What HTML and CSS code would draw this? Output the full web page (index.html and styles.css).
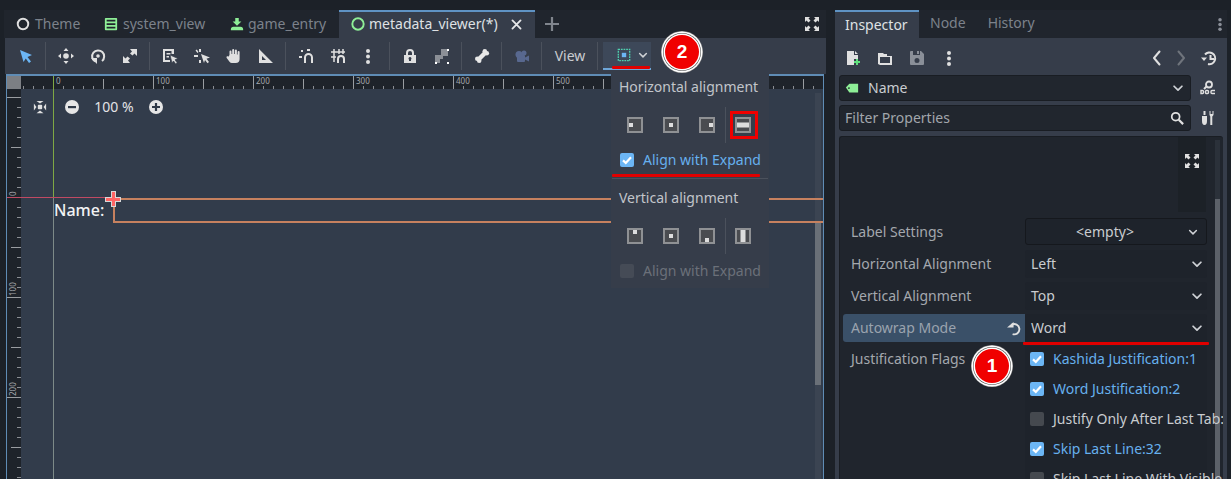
FILE: index.html
```html
<!DOCTYPE html>
<html lang="en">
<head>
<meta charset="utf-8">
<title>Godot editor</title>
<link rel="stylesheet" href="styles.css">
</head>
<body>
<svg class="defs" width="0" height="0" aria-hidden="true">
  <symbol id="chev" viewBox="0 0 16 16"><path d="M3.500 6 8 10.500 12.500 6" fill="none" stroke="currentColor" stroke-width="2" stroke-linecap="round" stroke-linejoin="round"/></symbol>
  <symbol id="check" viewBox="0 0 14 14"><rect width="14" height="14" rx="2" fill="#6cb6f5"/><path d="M3 7.400 5.800 10 11 4.200" fill="none" stroke="#fff" stroke-width="2.200"/></symbol>
  <symbol id="expand" viewBox="0 0 16 16"><path fill="currentColor" d="M1 1h5L4.500 2.500 6.500 4.500 4.500 6.500 2.500 4.500 1 6zM15 1v5l-1.500-1.500-2 2-2-2 2-2L10 1zM1 15v-5l1.500 1.500 2-2 2 2-2 2L6 15zM15 15h-5l1.500-1.500-2-2 2-2 2 2L15 10z"/></symbol>
  <symbol id="dots" viewBox="0 0 16 16"><circle cx="8" cy="3" r="2" fill="currentColor"/><circle cx="8" cy="8.500" r="2" fill="currentColor"/><circle cx="8" cy="14" r="2" fill="currentColor"/></symbol>
  <symbol id="frame" viewBox="0 0 16 16"><rect x="1" y="1" width="14" height="14" fill="#4a4c50" stroke="#8f9194" stroke-width="2"/></symbol>
</svg>

<div class="app">
  <main class="editor">
    <nav class="tabs">
      <div class="tab"><svg class="ic" viewBox="0 0 16 16"><circle cx="8" cy="8" r="6" fill="none" stroke="#e0e0e0" stroke-width="2.200"/></svg><span>Theme</span></div>
      <div class="tab"><svg class="ic" viewBox="0 0 16 16"><path fill="#8eef97" d="M2 1h12a1 1 0 0 1 1 1v12a1 1 0 0 1-1 1H2a1 1 0 0 1-1-1V2a1 1 0 0 1 1-1zm1 2v2h10V3zm0 4v2h10V7zm0 4v2h10v-2z"/></svg><span>system_view</span></div>
      <div class="tab"><svg class="ic" viewBox="0 0 16 16"><path fill="#8eef97" d="M6 1h4v4h3L8 10 3 5h3zM4 11h8a3 3 0 0 1 3 3v1H1v-1a3 3 0 0 1 3-3z"/></svg><span>game_entry</span></div>
      <div class="tab tab-active"><svg class="ic" viewBox="0 0 16 16"><circle cx="8" cy="8" r="6.500" fill="none" stroke="#8eef97" stroke-width="2.200"/></svg><span>metadata_viewer(*)</span><svg class="close" viewBox="0 0 16 16"><path d="M3 3 13 13M13 3 3 13" stroke="#e6e7e9" stroke-width="2.200" stroke-linecap="round"/></svg></div>
      <svg class="add" viewBox="0 0 16 16"><path d="M8 1v14M1 8h14" stroke="#80858d" stroke-width="2.200"/></svg>
      <svg class="full" viewBox="0 0 16 16"><use href="#expand"/></svg>
    </nav>

    <div class="toolbar">
      <button class="tool"><svg viewBox="0 0 16 16"><path fill="#6cb6f5" d="M2 2 14 7 9.500 9 13 13.500 11 15 7.800 10.500 5.500 14z"/></svg></button>
      <i class="sep"></i>
      <button class="tool"><svg viewBox="0 0 16 16"><path fill="#e0e0e0" d="M8 0l2.500 3h-5zM8 16l-2.500-3h5zM0 8l3-2.500v5zM16 8l-3 2.500v-5z"/><circle cx="8" cy="8" r="2.800" fill="#e0e0e0"/></svg></button>
      <button class="tool"><svg viewBox="0 0 16 16"><path fill="none" stroke="#e0e0e0" stroke-width="2" d="M5 13.500A6 6 0 1 1 12 13"/><path fill="#e0e0e0" d="M1 10h6v6z"/><circle cx="8" cy="8" r="1.800" fill="#e0e0e0"/></svg></button>
      <button class="tool"><svg viewBox="0 0 16 16"><path fill="#e0e0e0" d="M8 1h7v7l-2.500-2.500-2 2L8 5.500l2-2zM1 8l2.500 2.500 2-2L8 10.500l-2 2L8 15H1z"/></svg></button>
      <i class="sep"></i>
      <button class="tool"><svg viewBox="0 0 16 16"><path fill="#e0e0e0" fill-rule="evenodd" d="M1 1h11v5H9.500V3H3v9h5v2H1zM4.500 5h4v1.500h-4zM4.500 8H7v1.500H4.500z"/><path fill="#e0e0e0" d="M8 7l8 3.500-3 1.300 2.200 3-1.500 1.200-2.200-3L10 15z" stroke="#363d4a" stroke-width=".7"/></svg></button>
      <button class="tool"><svg viewBox="0 0 16 16"><path fill="#e0e0e0" d="M0 7h4v2H0zM5 1h2v3H5zM5 12h2v3H5zM1.500 2.500l1.300-1L4.500 4l-1 1z"/><path fill="#e0e0e0" d="M7 6l9 3.500-3.500 1.300 2.500 3.200-1.500 1.200-2.500-3.200L10 15z"/></svg></button>
      <button class="tool"><svg viewBox="0 0 16 16"><path fill="#e0e0e0" d="M3.500 7V3.500a1 1 0 0 1 2 0V6h.700V2a1 1 0 0 1 2 0v4h.700V2.500a1 1 0 0 1 2 0V6.500h.700V4a1 1 0 0 1 2 0v7a4 4 0 0 1-4 4H6a3 3 0 0 1-2.500-1.300L.700 10c-.8-1.200.8-2.300 1.700-1.300z"/></svg></button>
      <button class="tool"><svg viewBox="0 0 16 16"><path fill="#e0e0e0" fill-rule="evenodd" d="M1 1v14h14zM4 8l4 4H4z"/></svg></button>
      <i class="sep"></i>
      <button class="tool"><svg viewBox="0 0 16 16"><path fill="none" stroke="#e0e0e0" stroke-width="2" d="M7 15V9.500a3.500 3.500 0 0 1 7 0V15"/><rect x="1" y="8" width="3" height="2" fill="#e0e0e0"/><rect x="3" y="2" width="2" height="2" fill="#e0e0e0"/><rect x="9" y="1" width="3" height="2" fill="#e0e0e0"/></svg></button>
      <button class="tool"><svg viewBox="0 0 16 16"><path fill="none" stroke="#e0e0e0" stroke-width="1.500" d="M1 4h9M1 9h5M4 1v13M9 1v5"/><path fill="none" stroke="#e0e0e0" stroke-width="2" d="M8 15v-4a3 3 0 0 1 6 0v4"/><path stroke="#e0e0e0" stroke-width="1.500" d="M13 1v5M10 4h5"/></svg></button>
      <button class="tool tool-dots"><svg viewBox="0 0 16 16"><use href="#dots"/></svg></button>
      <i class="sep"></i>
      <button class="tool"><svg viewBox="0 0 16 16"><path fill="none" stroke="#e0e0e0" stroke-width="2" d="M5 7V5a3 3 0 0 1 6 0v2"/><path fill="#e0e0e0" fill-rule="evenodd" d="M2 7h12v8H2zM8 9a1.500 1.500 0 0 0-1 2.600V13h2v-1.400A1.500 1.500 0 0 0 8 9z"/></svg></button>
      <button class="tool"><svg viewBox="0 0 16 16"><path fill="#8b8f96" d="M1 7h5v8H1zM6 7h3v4H6zM7 1h7v7H7z"/><path fill="#fff" d="M1 14h2v2H1zM13 14h2v2h-2zM13 1h2v2h-2z"/></svg></button>
      <i class="sep"></i>
      <button class="tool"><svg viewBox="0 0 16 16"><path d="M4.500 11.500 11.500 4.500" stroke="#e8e8e8" stroke-width="4.500"/><circle cx="3.300" cy="10.800" r="2.300" fill="#e8e8e8"/><circle cx="5.200" cy="12.800" r="2.300" fill="#e8e8e8"/><circle cx="10.800" cy="3.300" r="2.300" fill="#e8e8e8"/><circle cx="12.800" cy="5.200" r="2.300" fill="#e8e8e8"/></svg></button>
      <i class="sep"></i>
      <button class="tool"><svg viewBox="0 0 16 16"><g fill="#58688f"><circle cx="5" cy="6.500" r="3.500"/><circle cx="10" cy="5" r="2.500"/><rect x="3" y="7" width="8" height="7" rx="1"/><path d="M11 9.500l4-2v6l-4-2z"/></g></svg></button>
      <i class="sep"></i>
      <button class="view-btn">View</button>
      <i class="sep"></i>
      <button class="anchor-btn"><svg class="anchor-ic" viewBox="0 0 16 16"><path fill="none" stroke="#4fd1b0" stroke-width="1.500" stroke-dasharray="2 1" d="M1.500 1.500h13v13h-13z"/><rect x="5.500" y="5.500" width="5" height="5" fill="#6cb6f5"/></svg><svg class="chev chev-anchor" viewBox="0 0 16 16"><use href="#chev"/></svg></button>
    </div>

    <section class="viewport">
      <div class="corner"></div>
      <div class="ruler-h"></div>
      <div class="ruler-v"></div>
      <span class="rnum rnum-h n0">0</span><span class="rnum rnum-h n100">100</span><span class="rnum rnum-h n200">200</span><span class="rnum rnum-h n300">300</span><span class="rnum rnum-h n400">400</span><span class="rnum rnum-h n500">500</span>
      <span class="rnum rnum-v v0">0</span><span class="rnum rnum-v v100">100</span><span class="rnum rnum-v v200">200</span>
      <div class="guide-v"></div>
      <div class="guide-v-low"></div>
      <div class="guide-h"></div>
      <div class="zoombar">
        <svg class="center-ic" viewBox="0 0 16 16"><path fill="#e0e0e0" d="M1 4l3 4-3 4zM15 4l-3 4 3 4zM4 1l4 3 4-3zM4 15l4-3 4 3z"/><rect x="5.500" y="5.500" width="5" height="5" rx="1" fill="#e0e0e0"/></svg>
        <svg class="zoom-ic" viewBox="0 0 16 16"><circle cx="8" cy="8" r="7" fill="#e6e6e6"/><rect x="4" y="7" width="8" height="2.200" fill="#2f3947"/></svg>
        <span class="zoom-val">100 %</span>
        <svg class="zoom-ic" viewBox="0 0 16 16"><circle cx="8" cy="8" r="7" fill="#e6e6e6"/><path d="M4 8h8M8 4v8" stroke="#2f3947" stroke-width="2.200"/></svg>
      </div>
      <div class="vp-scroll"></div>
      <div class="node-box"></div>
      <span class="node-label">Name:</span>
      <div class="handle"></div>
    </section>
  </main>

  <aside class="dock">
    <nav class="dock-tabs">
      <div class="dtab dtab-active">Inspector</div>
      <div class="dtab">Node</div>
      <div class="dtab">History</div>
      <svg class="dock-menu" viewBox="0 0 16 16"><use href="#dots"/></svg>
    </nav>
    <div class="dock-body">
      <div class="dock-tools">
        <svg class="ic-d" viewBox="0 0 16 16"><path fill="#e0e0e0" d="M2 1h7v4h4v4H9v6H2zM10 1l3 3h-3z"/><path fill="#5fe07c" d="M11 9h2v2h2v2h-2v2h-2v-2H9v-2h2z"/></svg>
        <svg class="ic-d" viewBox="0 0 16 16"><path fill="#e0e0e0" fill-rule="evenodd" d="M1 3h5l1 1h3v2h5v9H3L1 14zM3 7v6h10V7z"/></svg>
        <svg class="ic-d dim" viewBox="0 0 16 16"><path fill="#8a8f98" fill-rule="evenodd" d="M2 1h2v4h7V1h1l3 3v10a1 1 0 0 1-1 1H2a1 1 0 0 1-1-1V2a1 1 0 0 1 1-1zM8 8a2.500 2.500 0 1 0 0 5 2.500 2.500 0 0 0 0-5zM8 1h2v3H8z"/></svg>
        <svg class="ic-d dots-d" viewBox="0 0 16 16"><use href="#dots"/></svg>
        <span class="grow"></span>
        <svg class="ic-d nav" viewBox="0 0 16 16"><path d="M10.500 1.500 5 8l5.500 6.500" fill="none" stroke="#e0e0e0" stroke-width="2" stroke-linecap="round" stroke-linejoin="round"/></svg>
        <svg class="ic-d nav" viewBox="0 0 16 16"><path d="M5.500 1.500 11 8l-5.500 6.500" fill="none" stroke="#6f747c" stroke-width="2" stroke-linecap="round" stroke-linejoin="round"/></svg>
        <svg class="ic-d hist" viewBox="0 0 16 16"><path fill="none" stroke="#e0e0e0" stroke-width="2" d="M4 4.500A5.800 5.800 0 1 1 7 14M9.500 5v4H13"/><path fill="#e0e0e0" d="M0 7.500h6L3 11z"/></svg>
      </div>
      <div class="field-row">
        <div class="field"><svg class="tag" viewBox="0 0 16 16"><path fill="#8eef97" d="M1 7.500 5 3h10v10H5z"/><circle cx="4.500" cy="8" r="1" fill="#1f242c"/></svg><span class="field-text">Name</span><svg class="chev" viewBox="0 0 16 16"><use href="#chev"/></svg></div>
        <svg class="side-ic" viewBox="0 0 16 16"><circle cx="9" cy="4.500" r="3" fill="none" stroke="#e0e0e0" stroke-width="1.800"/><path d="M6.500 6.500 4 9" stroke="#e0e0e0" stroke-width="2"/><path fill="none" stroke="#e0e0e0" stroke-width="1.400" d="M1 10.500h1.500a1 1 0 0 1 1 1v1a1 1 0 0 1-1 1H1zM6 10.500h1.500a1 1 0 0 1 1 1v1a1 1 0 0 1-1 1H6a1 1 0 0 1-.5-1v-1a1 1 0 0 1 .5-1zM15 10.500h-3a1 1 0 0 0-1 1v1a1 1 0 0 0 1 1h3"/></svg>
      </div>
      <div class="field-row">
        <div class="field filter"><span class="field-text dim-text">Filter Properties</span><svg class="search" viewBox="0 0 16 16"><circle cx="6.500" cy="6.500" r="4.500" fill="none" stroke="#e0e0e0" stroke-width="2"/><path d="M10 10l5 5" stroke="#e0e0e0" stroke-width="2.500"/></svg></div>
        <svg class="side-ic" viewBox="0 0 16 16"><path fill="#e0e0e0" d="M2 6h5v5a2.500 4 0 0 1-5 0zM3.500 1h2v4h-2zM9.500 1h1v3h2V1h1v4l-1.200 1.500V15h-2V6.500L9.500 5z"/></svg>
      </div>
      <section class="props">
        <div class="preview"><div class="preview-btn"><svg class="full-small" viewBox="0 0 16 16"><use href="#expand"/></svg></div></div>
        <div class="prop"><label class="pl">Label Settings</label><div class="pf pf-res"><span class="center-text">&lt;empty&gt;</span><svg class="chev small" viewBox="0 0 16 16"><use href="#chev"/></svg></div></div>
        <div class="prop"><label class="pl">Horizontal Alignment</label><div class="pf"><span>Left</span><svg class="chev" viewBox="0 0 16 16"><use href="#chev"/></svg></div></div>
        <div class="prop"><label class="pl">Vertical Alignment</label><div class="pf"><span>Top</span><svg class="chev" viewBox="0 0 16 16"><use href="#chev"/></svg></div></div>
        <div class="prop"><label class="pl pl-mod">Autowrap Mode<svg class="revert" viewBox="0 0 16 16"><path fill="none" stroke="#e0e0e0" stroke-width="2" d="M5 4a5.500 5.500 0 1 1 1 10"/><path fill="#e0e0e0" d="M0 7h7V1z"/></svg></label><div class="pf"><span>Word</span><svg class="chev" viewBox="0 0 16 16"><use href="#chev"/></svg></div></div>
        <div class="flags">
          <div class="flags-label">Justification Flags</div>
          <div class="flags-list">
            <div class="flag on"><svg class="cb" viewBox="0 0 14 14"><use href="#check"/></svg>Kashida Justification:1</div>
            <div class="flag on"><svg class="cb" viewBox="0 0 14 14"><use href="#check"/></svg>Word Justification:2</div>
            <div class="flag"><span class="cb cb-off"></span>Justify Only After Last Tab:</div>
            <div class="flag on"><svg class="cb" viewBox="0 0 14 14"><use href="#check"/></svg>Skip Last Line:32</div>
            <div class="flag"><span class="cb cb-off"></span>Skip Last Line With Visible</div>
          </div>
        </div>
        <div class="props-scroll"><div class="props-thumb"></div></div>
      </section>
    </div>
  </aside>

  <div class="popup">
    <div class="pop-title">Horizontal alignment</div>
    <div class="pop-icons">
      <svg class="al" viewBox="0 0 16 16"><use href="#frame"/><rect x="2" y="6" width="4" height="4" fill="#ddd"/></svg>
      <svg class="al" viewBox="0 0 16 16"><use href="#frame"/><rect x="6" y="6" width="4" height="4" fill="#ddd"/></svg>
      <svg class="al" viewBox="0 0 16 16"><use href="#frame"/><rect x="10" y="6" width="4" height="4" fill="#ddd"/></svg>
      <i class="vsep"></i>
      <svg class="al" viewBox="0 0 16 16"><use href="#frame"/><rect x="2" y="5.500" width="12" height="5" fill="#ddd"/></svg>
    </div>
    <div class="pop-check on"><svg class="cb" viewBox="0 0 14 14"><use href="#check"/></svg>Align with Expand</div>
    <div class="pop-line"></div>
    <div class="pop-title second">Vertical alignment</div>
    <div class="pop-icons">
      <svg class="al" viewBox="0 0 16 16"><use href="#frame"/><rect x="6" y="2" width="4" height="4" fill="#ddd"/></svg>
      <svg class="al" viewBox="0 0 16 16"><use href="#frame"/><rect x="6" y="6" width="4" height="4" fill="#ddd"/></svg>
      <svg class="al" viewBox="0 0 16 16"><use href="#frame"/><rect x="6" y="10" width="4" height="4" fill="#ddd"/></svg>
      <i class="vsep"></i>
      <svg class="al" viewBox="0 0 16 16"><use href="#frame"/><rect x="5.500" y="2" width="5" height="12" fill="#ddd"/></svg>
    </div>
    <div class="pop-check off"><span class="cb cb-off"></span>Align with Expand</div>
  </div>

  <div class="mark-box"></div>
  <div class="mark-line ml-anchor"></div>
  <div class="mark-line ml-expand"></div>
  <div class="mark-line ml-word"></div>
  <div class="badge b2">2</div>
  <div class="badge b1">1</div>
</div>
</body>
</html>
```
FILE: styles.css
```css
* { box-sizing: border-box; }
html, body { margin: 0; height: 479px; overflow: hidden; background: #1c2128; }
body { font: 14px/20px "Noto Sans", sans-serif; color: #c9ccd0; }
.defs { position: absolute; }
button { font: inherit; color: inherit; background: none; border: 0; padding: 0; }
svg { display: block; flex: none; color: #e0e0e0; }

.app { position: relative; display: flex; gap: 9px; width: 1231px; height: 479px; padding: 10px 4px 0; }
.editor { display: flex; flex-direction: column; width: 822px; }
.dock { display: flex; flex-direction: column; width: 392px; }

/* tabs */
.tabs { display: flex; align-items: stretch; height: 28px; background: #20252d; flex: none; }
.tab { display: flex; align-items: center; gap: 5px; padding: 0 11px 0 12px; color: #7c828b; white-space: nowrap; }
.tab:nth-child(1) { width: 81px; padding-left: 12px; gap: 5px; }
.tab:nth-child(2) { width: 126px; padding-left: 19px; }
.tab:nth-child(3) { width: 128px; padding-left: 19px; gap: 4px; }
.tab-active { width: 196px; background: #363d4a; border-top: 2px solid #5f93c4; color: #dfe1e4; padding: 0 0 2px 12px; gap: 4px; }
.ic { width: 14px; height: 14px; }
.close { width: 13px; height: 13px; margin-left: 8px; }
.add { width: 16px; height: 16px; margin: 6px 0 0 9px; }
.full { width: 16px; height: 16px; margin: 6px 6px 0 auto; }

/* toolbar */
.toolbar { display: flex; align-items: center; height: 36px; margin-left: 1px; padding-left: 5px; background: #363d4a; flex: none; }
.tool { width: 32px; height: 30px; display: flex; align-items: center; justify-content: center; }
.tool svg { width: 16px; height: 16px; }
.tool-dots { margin-left: -2px; margin-right: 2px; }
.sep { display: block; width: 1px; height: 28px; margin: 0 4px 0 3px; background: #4b515c; flex: none; }
.view-btn { width: 48px; height: 30px; color: #c9ccd0; text-align: center; }
.anchor-btn { display: flex; align-items: center; gap: 6px; width: 48px; height: 28px; margin-left: 1px; padding: 0 0 0 14px; background: #3d4859; border-bottom: 2px solid #6ea6d8; }
.anchor-ic { width: 14px; height: 14px; }
.chev { width: 14px; height: 14px; color: #cfd2d6; margin-left: auto; }
.chev-anchor { margin-left: 0; width: 12px; height: 12px; }

/* viewport */
.viewport { position: relative; flex: 1; margin: 0 2px; background: #323c4b; border: solid #5f8cb5; border-width: 2px 1px 0 1px; overflow: hidden; }
.corner { position: absolute; left: 0; top: 0; width: 14px; height: 13px; background: #7c7f84; }
.ruler-h { position: absolute; left: 14px; right: 0; top: 0; height: 13px; background-color: #1e232a;
  background-image:
    repeating-linear-gradient(90deg, transparent 0 32px, #9a9da1 32px 33px, transparent 33px 100px),
    repeating-linear-gradient(90deg, transparent 0 32px, #9a9da1 32px 33px, transparent 33px 50px),
    repeating-linear-gradient(90deg, transparent 0 2px, #8b8e93 2px 3px, transparent 3px 10px);
  background-repeat: no-repeat;
  background-size: 100% 13px, 100% 10px, 100% 3px;
  background-position: 0 100%; }
.ruler-v { position: absolute; left: 0; top: 13px; bottom: 0; width: 14px; background-color: #1e232a;
  background-image:
    repeating-linear-gradient(180deg, transparent 0 8px, #9a9da1 8px 9px, transparent 9px 100px),
    repeating-linear-gradient(180deg, transparent 0 8px, #9a9da1 8px 9px, transparent 9px 50px),
    repeating-linear-gradient(180deg, transparent 0 8px, #8b8e93 8px 9px, transparent 9px 10px);
  background-repeat: no-repeat;
  background-size: 14px 100%, 10px 100%, 4px 100%;
  background-position: 100% 0; }
.rnum { position: absolute; font-size: 8px; line-height: 10px; color: #a5a8ad; }
.rnum-h { top: 0; }
.n0 { left: 49px; } .n100 { left: 149px; } .n200 { left: 249px; } .n300 { left: 349px; } .n400 { left: 449px; } .n500 { left: 549px; }
.rnum-v { left: 1px; transform: rotate(-90deg); transform-origin: 0 0; }
.v0 { top: 120px; } .v100 { top: 220px; } .v200 { top: 320px; }
.guide-v { position: absolute; left: 46px; top: 0; height: 121px; width: 1px; background: #7fa844; }
.guide-v-low { position: absolute; left: 46px; top: 122px; bottom: 0; width: 1px; background: #7d8a88; }
.guide-h { position: absolute; left: 0; top: 121px; width: 106px; height: 1px; background: #c04a63; }
.zoombar { position: absolute; left: 26px; top: 23px; display: flex; align-items: center; height: 16px; }
.center-ic { width: 14px; height: 14px; }
.zoom-ic { width: 16px; height: 16px; }
.center-ic + .zoom-ic { margin-left: 17px; }
.zoom-val { width: 68px; text-align: center; font-size: 14px; color: #e2e3e6; }
.vp-scroll { position: absolute; right: 2px; top: 17px; bottom: 0; width: 6px; background: #3b4452; }
.vp-scroll::after { content: ""; position: absolute; left: 0; right: 0; top: 130px; height: 162px; background: #6a7078; }
.node-box { position: absolute; left: 106px; top: 122px; right: 0; height: 25px; border: solid #c6815f; border-width: 2px 0 2px 2px; }
.node-label { position: absolute; left: 47px; top: 124px; font-size: 16px; color: #f2f3f4; font-weight: 500; }
.handle { position: absolute; left: 98px; top: 115px; width: 16px; height: 16px;
  background:
    linear-gradient(#ff6464, #ff6464) center / 3px 14px no-repeat,
    linear-gradient(#ff6464, #ff6464) center / 14px 3px no-repeat,
    linear-gradient(#d8d8d8, #d8d8d8) center / 5px 16px no-repeat,
    linear-gradient(#d8d8d8, #d8d8d8) center / 16px 5px no-repeat; }

/* dock */
.dock-tabs { display: flex; align-items: center; height: 28px; background: #20252d; flex: none; }
.dtab { height: 28px; line-height: 26px; padding: 0 11px; color: #7c828b; }
.dtab-active { width: 84px; background: #363d4a; border-top: 2px solid #5f93c4; padding: 0 10px; color: #dfe1e4; line-height: 26px; }
.dock-menu { width: 14px; height: 14px; margin-left: auto; color: #8a8f98; }
.dock-body { flex: 1; display: flex; flex-direction: column; background: #363d4a; padding: 0 4px; min-height: 0; }
.dock-tools { display: flex; align-items: center; height: 37px; flex: none; padding: 3px 6px 0 6px; }
.ic-d { width: 16px; height: 16px; margin-right: 16px; }
.dots-d { margin-right: 0; }
.grow { flex: 1; }
.nav { margin-right: 8px; }
.hist { margin: 0 0 0 4px; }
.field-row { display: flex; align-items: center; gap: 9px; height: 26px; margin-bottom: 4px; flex: none; }
.field { display: flex; align-items: center; width: 352px; height: 26px; padding: 0 5px; background: #21262e; border: 1px solid #191d23; border-radius: 3px; }
.tag { width: 14px; height: 14px; margin-right: 9px; }
.search { width: 14px; height: 14px; margin-left: auto; margin-right: 1px; }
.dim-text { color: #a2a6ac; }
.side-ic { width: 16px; height: 16px; }
.props { position: relative; flex: 1; min-height: 0; margin-top: 1px; padding: 0 4px; background: #20252d; border: solid #191d23; border-width: 1px 0 0 1px; border-radius: 3px 3px 0 0; overflow: hidden; }
.preview { height: 75px; margin: 0 13px 6px 0; display: flex; justify-content: flex-end; }
.preview-btn { width: 28px; background: #1c2127; display: flex; justify-content: center; padding-top: 16px; }
.full-small { width: 16px; height: 16px; }
.prop { display: flex; height: 28px; margin-bottom: 4px; width: 364px; margin-left: -1px; }
.pl { flex: none; display: flex; align-items: center; width: 182px; padding-left: 8px; color: #a4a8ae; }
.pl-mod { background: #3a5068; border-radius: 3px 0 0 3px; color: #9aa3ae; position: relative; }
.revert { position: absolute; right: 3px; width: 15px; height: 15px; }
.pf { display: flex; align-items: center; width: 182px; padding: 0 3px 0 6px; background: #1e232b; color: #c9ccd0; border-radius: 3px; }
.pf-res { border: 1px solid #15181d; height: 27px; padding-right: 7px; }
.center-text { flex: 1; text-align: center; padding-right: 9px; }
.small { width: 12px; height: 12px; }
.flags { position: relative; z-index: 1; display: flex; width: 364px; margin-left: -1px; }
.flags-label { width: 182px; padding: 3px 0 0 8px; color: #a4a8ae; }
.flags-list { width: 182px; background: #1e232b; padding: 3px 0 0 5px; white-space: nowrap; }
.flag { display: flex; align-items: center; gap: 9px; height: 30px; margin-top: -5px; margin-bottom: 5px; color: #c9ccd0; }
.flag.on { color: #66b0ee; }
.cb { width: 14px; height: 14px; flex: none; }
.cb-off { display: block; background: #45494f; border-radius: 2px; }
.props-scroll { position: absolute; right: 3px; top: 3px; bottom: 0; width: 5px; background: #2b313a; }
.props-thumb { position: absolute; left: 0; right: 0; top: 59px; bottom: 0; background: #5c6169; }

/* popup */
.popup { position: absolute; left: 611px; top: 74px; width: 158px; height: 214px; background: #363d4a; padding: 3px 1px 0; }
.pop-title { height: 20px; padding-left: 7px; color: #c2c5ca; }
.second { margin-top: 9px; }
.pop-icons { display: flex; align-items: center; height: 36px; margin-top: 10px; padding-left: 15px; }
.al { width: 16px; height: 16px; margin-right: 20px; }
.pop-icons .al:nth-child(3) { margin-right: 10px; }
.pop-icons .al:last-child { margin: 0; }
.vsep { display: block; width: 1px; height: 36px; margin-right: 9px; background: #4b515c; }
.pop-check { display: flex; align-items: center; gap: 9px; height: 30px; padding-left: 8px; margin-top: 2px; white-space: nowrap; }
.pop-check.on { color: #66b0ee; }
.pop-check.off { color: #6b7079; }
.pop-check .cb-off { background: #454b56; }
.pop-line { height: 1px; margin: 3px 0 0; background: #4b515c; }

/* annotations */
.mark-box { position: absolute; left: 730px; top: 111px; width: 28px; height: 28px; border: 3px solid #f00000; }
.mark-line { position: absolute; height: 3px; background: #e00000; border-radius: 1px; }
.ml-anchor { left: 612px; top: 66px; width: 38px; }
.ml-expand { left: 612px; top: 174px; width: 148px; }
.ml-word { left: 1023px; top: 342px; width: 186px; }
.badge { position: absolute; width: 34px; height: 34px; border-radius: 50%; background: #f00000; color: #fff; font: 700 19px/34px "Liberation Sans", sans-serif; text-align: center; box-shadow: 0 0 0 1.5px #fff, 0 0 0 2px #444, 0 0 0 3.500px #fff, 0 0 0 4px #8a8a8a; }
.b2 { left: 665px; top: 35px; }
.b1 { left: 975px; top: 349px; }
```
